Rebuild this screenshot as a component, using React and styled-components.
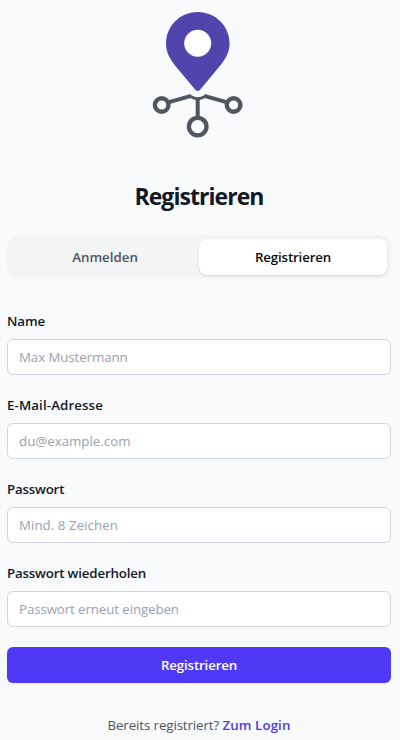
import React from "react";
import styled, { createGlobalStyle } from "styled-components";

const GlobalStyle = createGlobalStyle`
  *, *::before, *::after { box-sizing: border-box; }
  body {
    margin: 0;
    background: #f9fafb;
    color: #101828;
    font-family: "Segoe UI", "Open Sans", "Noto Sans", sans-serif;
    font-size: 13.3px;
    line-height: 20px;
  }
`;

const Page = styled.main`
  display: flex;
  flex-direction: column;
  height: 740px;
  padding: 0 9px 0 7px;
  overflow: hidden;
`;

const Logo = styled.svg`
  display: block;
  flex: none;
  align-self: center;
  width: 120px;
  height: 150px;
  margin-left: 2px;
`;

const Title = styled.h1`
  margin: 30px 0 0;
  text-align: center;
  font-size: 23px;
  font-weight: 700;
  line-height: 32px;
  letter-spacing: -0.95px;
`;

const Tabs = styled.div`
  display: grid;
  grid-template-columns: 1fr 1fr;
  flex: none;
  height: 44px;
  margin-top: 23px;
  padding: 4px;
  border-radius: 12px;
  background: #f3f4f6;
`;

const Tab = styled.button`
  height: 36px;
  padding: 0;
  border: 0;
  border-radius: 8px;
  font: inherit;
  font-weight: 600;
  letter-spacing: ${({ $tracking }) => $tracking || 0}px;
  color: ${({ $active }) => ($active ? "#0a0a0a" : "#4a5565")};
  background: ${({ $active }) => ($active ? "#fff" : "transparent")};
  box-shadow: ${({ $active }) =>
    $active ? "0 1px 3px rgba(0,0,0,.1), 0 1px 2px -1px rgba(0,0,0,.1)" : "none"};
`;

const Form = styled.form`
  display: flex;
  flex-direction: column;
  gap: 20px;
  margin-top: 32px;
`;

const Field = styled.div`
  display: flex;
  flex-direction: column;
  gap: 8px;
`;

const Label = styled.label`
  font-weight: 600;
  letter-spacing: ${({ $tracking }) => $tracking || 0}px;
`;

const Input = styled.input`
  width: 100%;
  height: 36px;
  padding: 0 11px;
  border: 1px solid #d1d5dc;
  border-radius: 6px;
  background: #fff;
  font: inherit;
  letter-spacing: ${({ $tracking }) => $tracking || 0}px;

  &::placeholder {
    color: #99a1af;
    opacity: 1;
  }
`;

const SubmitButton = styled.button`
  height: 36px;
  padding: 0;
  border: 0;
  border-radius: 6px;
  background: #4f39f6;
  box-shadow: 0 1px 2px rgba(0, 0, 0, 0.05);
  color: #fff;
  font: inherit;
  font-weight: 600;
  letter-spacing: -0.15px;
`;

const Footer = styled.p`
  margin: 32px 0 0;
  text-align: center;
  color: #4a5565;
  letter-spacing: -0.1px;
`;

const LoginLink = styled.a`
  color: #4f39e6;
  font-weight: 600;
  letter-spacing: 0.1px;
  text-decoration: none;
`;

const FIELDS = [
  { id: "name", label: "Name", type: "text", hint: "Max Mustermann", labelTracking: -0.1, hintTracking: -0.09 },
  { id: "email", label: "E-Mail-Adresse", type: "email", hint: "du@example.com", labelTracking: 0.11, hintTracking: 0 },
  { id: "password", label: "Passwort", type: "password", hint: "Mind. 8 Zeichen", labelTracking: -0.2, hintTracking: 0.05 },
  { id: "repeat", label: "Passwort wiederholen", type: "password", hint: "Passwort erneut eingeben", labelTracking: -0.18, hintTracking: -0.1 },
];

function PinLogo() {
  return (
    <Logo viewBox="0 0 120 150" fill="none" aria-hidden="true">
      <path
        fill="#5145ad"
        d="M57.700 12C40 12 26 26 26 43.500C26 52.500 30 59 35 65.500L55.500 90Q57.700 92.200 59.900 90L80.200 65.500C85.500 59 89.500 52.500 89.500 43.500C89.500 26 75.400 12 57.700 12Z"
      />
      <circle cx="57.700" cy="43.200" r="13.500" fill="#fff" />
      <g stroke="#515660">
        <path d="M29 102.200L51.200 95.800M86.500 102.200L64.200 95.800M57.700 98.500V117" strokeWidth="4" />
        <path d="M50.500 96.500Q54 98.700 57.700 98.700Q61.400 98.700 64.900 96.500" strokeWidth="3" />
        <circle cx="21.700" cy="105" r="6.800" fill="#fff" strokeWidth="4.400" />
        <circle cx="93.600" cy="105" r="6.800" fill="#fff" strokeWidth="4.400" />
        <circle cx="57.700" cy="126.600" r="8.800" fill="#fff" strokeWidth="4.300" />
      </g>
    </Logo>
  );
}

export default function App() {
  return (
    <>
      <GlobalStyle />
      <Page>
        <PinLogo />
        <Title>Registrieren</Title>
        <Tabs>
          <Tab type="button">Anmelden</Tab>
          <Tab type="button" $active $tracking={-0.15}>Registrieren</Tab>
        </Tabs>
        <Form>
          {FIELDS.map((field) => (
            <Field key={field.id}>
              <Label htmlFor={field.id} $tracking={field.labelTracking}>{field.label}</Label>
              <Input id={field.id} type={field.type} placeholder={field.hint} $tracking={field.hintTracking} />
            </Field>
          ))}
          <SubmitButton type="button">Registrieren</SubmitButton>
        </Form>
        <Footer>
          Bereits registriert? <LoginLink href="#login">Zum Login</LoginLink>
        </Footer>
      </Page>
    </>
  );
}
